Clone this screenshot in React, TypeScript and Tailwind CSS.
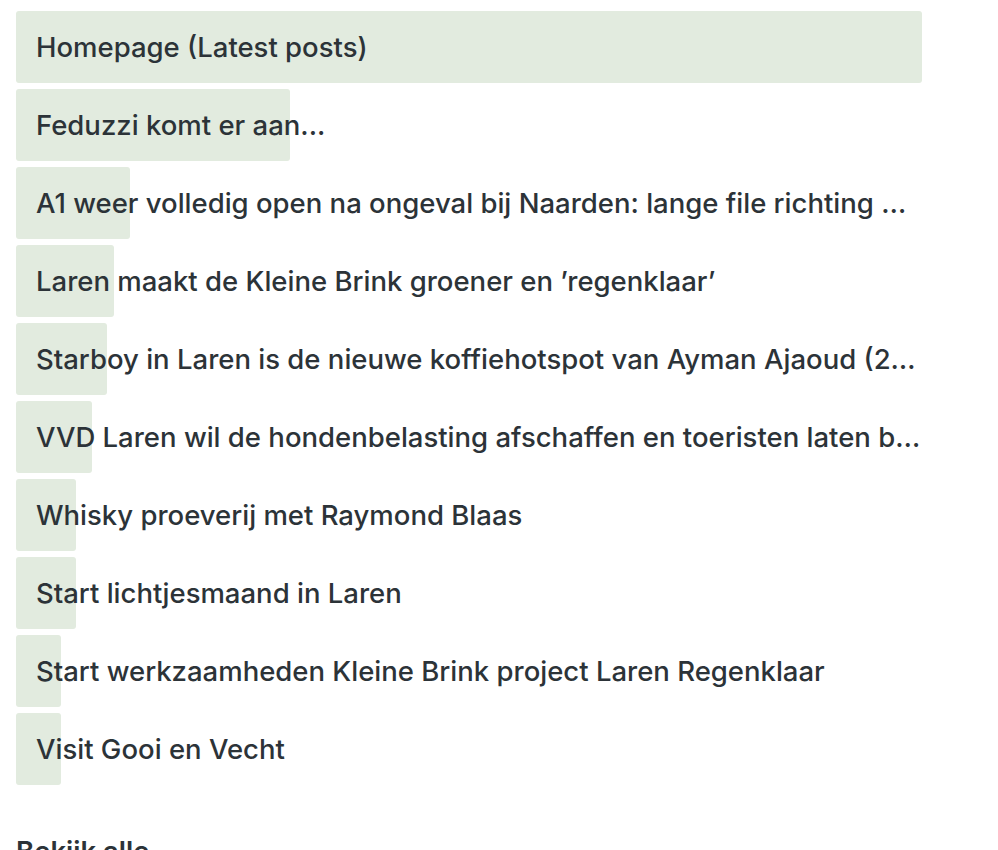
import React from "react";

const rows: { title: string; w: number }[] = [
  { title: "Homepage (Latest posts)", w: 906 },
  { title: "Feduzzi komt er aan...", w: 274 },
  { title: "A1 weer volledig open na ongeval bij Naarden: lange file richting Amsterdam", w: 114 },
  { title: "Laren maakt de Kleine Brink groener en ’regenklaar’", w: 98 },
  { title: "Starboy in Laren is de nieuwe koffiehotspot van Ayman Ajaoud (25 jaar)", w: 91 },
  { title: "VVD Laren wil de hondenbelasting afschaffen en toeristen laten betalen", w: 76 },
  { title: "Whisky proeverij met Raymond Blaas", w: 60 },
  { title: "Start lichtjesmaand in Laren", w: 60 },
  { title: "Start werkzaamheden Kleine Brink project Laren Regenklaar", w: 45 },
  { title: "Visit Gooi en Vecht", w: 45 },
];

export default function App() {
  return (
    <div
      className="min-h-[850px] bg-white pl-[16px] pt-[11px] text-[#2c3338]"
      style={{ fontFamily: "Inter, 'Noto Sans', sans-serif" }}
    >
      <ul className="flex w-[906px] flex-col gap-[6px]">
        {rows.map((r) => (
          <li key={r.title} className="relative h-[72px]">
            <div
              className="absolute left-0 top-0 h-full rounded-[3px] bg-[#e2ebdf]"
              style={{ width: r.w }}
            />
            <div className="relative truncate pl-[20px] text-[27.5px] font-medium leading-[72px]">
              {r.title}
            </div>
          </li>
        ))}
      </ul>
      <div className="mt-[48px] text-[27.5px] font-semibold leading-[36px]">Bekijk alle</div>
    </div>
  );
}
